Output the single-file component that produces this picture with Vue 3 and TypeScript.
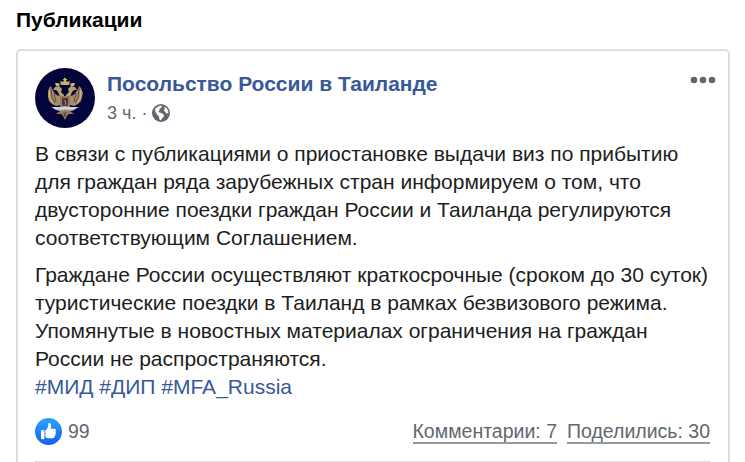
<template>
    <main class="page">
        <h2 class="page__title">Публикации</h2>
        <article class="post">
            <header class="post__header">
                <svg class="avatar" viewBox="0 0 60 60" aria-hidden="true">
                    <circle cx="30" cy="30" r="30" fill="#03053b" />
                    <!-- wings -->
                    <g fill="#a88d68">
                        <path d="M25 28C21 28 18 24 16 18L14 20L13 25L13 29L14 33L17 36L21 38L25 37L28 33Z" />
                        <path d="M35 28C39 28 42 24 44 18L46 20L48 25L47 29L46 33L43 36L39 38L35 37L32 33Z" />
                    </g>
                    <path d="M16 20L17 30L20 35M19 25L21 34M44 20L43 30L40 35M41 25L39 34" fill="none" stroke="#57443c" stroke-width="0.9" />
                    <path d="M14 22L15 31L18 35M46 22L45 31L42 35" fill="none" stroke="#d8bd86" stroke-width="1" />
                    <!-- heads and body -->
                    <path d="M18 22L20 19L24 18L27 21L26 24L29 27V30L25 29L23 24L21 22ZM42 22L40 19L36 18L33 21L34 24L31 27V30L35 29L37 24L39 22Z" fill="#baa06c" />
                    <path d="M25 28H35V43L39 46L34 46L32 48L30 52L28 48L26 46L21 46L25 43Z" fill="#94795b" />
                    <path d="M26 17L25 13L28 14L29 12H28V11H29V10H31V11H32V12H31L32 14L35 13L34 17Z" fill="#cdb260" />
                    <path d="M21 18L20 15L23 15L25 16L24 18ZM39 18L40 15L37 15L35 16L36 18Z" fill="#d0b46b" />
                    <path d="M27 30H33V36Q32 39 30 39Q28 39 27 36Z" fill="#4b323c" />
                    <path d="M29 32L31 34L30 37" fill="none" stroke="#b49a80" />
                    <path d="M16 39L26 39L30 38L34 39L44 39L37 43L31 42L25 43L21 42Z" fill="#b6bec9" />
                    <path d="M19 40H41" fill="none" stroke="#f1f0e7" />
                    <path d="M29 44L30 49L31 44" fill="none" stroke="#5c4e49" />
                </svg>
                <div class="post__meta">
                    <a class="post__author">Посольство России в Таиланде</a>
                    <div class="post__time">
                        <span>3 ч.</span>
                        <span class="post__dot">·</span>
                        <svg class="globe" viewBox="0 0 18 18" aria-hidden="true">
                            <circle cx="9" cy="9" r="9" fill="#616770" />
                            <path d="M3 5.2L5.4 2.8L8.8 1.6L10.2 2.4L8.8 4L7.2 5L7.8 6.2L6.4 7.2L7.4 8.6L10 9.2L12 11L11.4 13.2L9.8 14.6L9 16.4L7.4 15.4L7 12.4L5 10.4L3.6 8Z" fill="#fff" />
                            <path d="M12.2 2.6L14.6 4.2L16.2 6.6L16.3 9.2L14.6 9.6L13.2 8L12 6.6L12.8 4.8Z" fill="#fff" />
                        </svg>
                    </div>
                </div>
                <svg class="more" viewBox="0 0 26 8" aria-label="Ещё">
                    <circle v-for="cx in [4, 13, 22]" :key="cx" :cx="cx" cy="4" r="3.3" />
                </svg>
            </header>

            <div class="post__text">
                <p v-for="(lines, i) in paragraphs" :key="i">
                    <span v-for="line in lines" :key="line" class="line">{{ line }}</span>
                    <span v-if="i === paragraphs.length - 1" class="line tags">
                        <template v-for="tag in tags" :key="tag"><a>{{ tag }}</a>{{ ' ' }}</template>
                    </span>
                </p>
            </div>

            <footer class="post__footer">
                <div class="likes">
                    <svg class="likes__icon" viewBox="0 0 27 27" aria-hidden="true">
                        <defs>
                            <linearGradient id="like" x1="0" y1="0" x2="0" y2="1">
                                <stop offset="0" stop-color="#2ba3fb" />
                                <stop offset="1" stop-color="#1660f0" />
                            </linearGradient>
                        </defs>
                        <circle cx="13.5" cy="13.5" r="13.5" fill="url(#like)" />
                        <rect x="6" y="12" width="3.4" height="9.2" rx="1" fill="#fff" />
                        <path d="M10.4 12.5C12.4 10.8 13.2 9 13.2 6.4C13.2 4.2 16.2 4.5 16.2 7.7C16.2 9 15.8 10.1 15.5 10.8H19.2C21.2 10.8 21.6 12.8 20.4 13.7C21.4 14.7 21 15.8 20.2 16.3C20.7 17.3 20.2 18.3 19.4 18.6C19.6 19.8 18.8 20.3 17.5 20.3H14.3C12.5 20.3 11.5 19.8 10.4 19.2Z" fill="#fff" />
                    </svg>
                    <span>{{ likes }}</span>
                </div>
                <div class="stats">
                    <a class="stats__link">Комментарии: {{ comments }}</a>
                    <a class="stats__link">Поделились: {{ shares }}</a>
                </div>
            </footer>
        </article>
    </main>
</template>

<script lang="ts" setup>
const paragraphs: string[][] = [
    [
        'В связи с публикациями о приостановке выдачи виз по прибытию',
        'для граждан ряда зарубежных стран информируем о том, что',
        'двусторонние поездки граждан России и Таиланда регулируются',
        'соответствующим Соглашением.',
    ],
    [
        'Граждане России осуществляют краткосрочные (сроком до 30 суток)',
        'туристические поездки в Таиланд в рамках безвизового режима.',
        'Упомянутые в новостных материалах ограничения на граждан',
        'России не распространяются.',
    ],
];

const tags = ['#МИД', '#ДИП', '#MFA_Russia'];

const likes = 99;
const comments = 7;
const shares = 30;
</script>

<style>
body {
    background: #fff;
    overflow: hidden;
}
</style>

<style scoped>
.page {
    box-sizing: border-box;
    height: 462px;
    padding: 7px 15px 0 16px;
    overflow: hidden;
    font-family: "Liberation Sans", Arial, sans-serif;
    color: #1c1e21;
}

.page__title {
    margin: 0 0 16px;
    font-size: 21px;
    font-weight: 700;
    line-height: 26px;
    color: #000;
}

.post {
    box-sizing: border-box;
    width: 714px;
    height: 440px;
    padding: 17px 18px 0 17px;
    border: 2px solid #dddee3;
    border-radius: 5px;
}

.post__header {
    display: flex;
    height: 60px;
}

.avatar {
    flex: none;
    width: 60px;
    height: 60px;
}

.post__meta {
    flex: 1;
    margin-left: 12px;
}

.post__author {
    display: block;
    margin-top: 2px;
    font-size: 21px;
    font-weight: 700;
    line-height: 28px;
    color: #385898;
}

.post__time {
    display: flex;
    align-items: center;
    height: 30px;
    font-size: 18px;
    line-height: 28px;
    color: #616770;
}

.post__dot {
    margin: 0 5px;
}

.globe {
    width: 18px;
    height: 18px;
}

.more {
    width: 26px;
    height: 8px;
    margin-top: 8px;
    margin-right: -6px;
    fill: #616770;
}

.post__text {
    margin-top: 12px;
    font-size: 21px;
    line-height: 28px;
}

.post__text p {
    margin: 0 0 9px;
}

.line {
    display: block;
    white-space: nowrap;
}

.tags {
    color: #385898;
}

.post__footer {
    display: flex;
    justify-content: space-between;
    height: 52px;
    margin-top: 8px;
    box-sizing: border-box;
    padding-top: 8px;
    border-bottom: 1px solid #dadde1;
    font-size: 19.5px;
    color: #616770;
}

.likes {
    display: flex;
    height: 27px;
    line-height: 27px;
}

.likes__icon {
    width: 27px;
    height: 27px;
    margin-right: 6px;
}

.stats {
    display: flex;
    gap: 10px;
    line-height: 26px;
}

.stats__link {
    height: 24px;
    border-bottom: 2px solid #999;
}
</style>
